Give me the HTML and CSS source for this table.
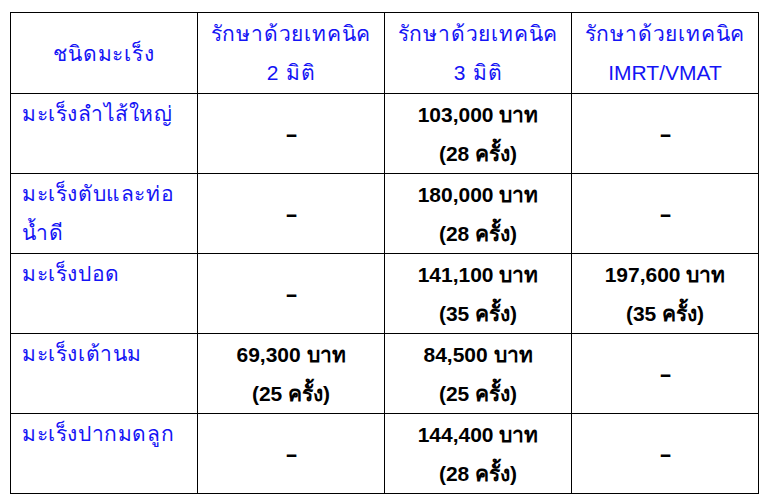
FILE: index.html
```html
<!DOCTYPE html>
<html lang="th">
<head>
<meta charset="utf-8">
<title>ค่ารักษามะเร็ง</title>
<link rel="stylesheet" href="styles.css">
</head>
<body>
<table class="price-table">
  <colgroup>
    <col class="col"><col class="col"><col class="col"><col class="col">
  </colgroup>
  <thead>
    <tr class="head-row">
      <th class="head">ชนิดมะเร็ง</th>
      <th class="head">รักษาด้วยเทคนิค<br>2 มิติ</th>
      <th class="head">รักษาด้วยเทคนิค<br>3 มิติ</th>
      <th class="head">รักษาด้วยเทคนิค<br><span class="latin">IMRT/VMAT</span></th>
    </tr>
  </thead>
  <tbody>
    <tr class="row">
      <td class="name">มะเร็งลำไส้ใหญ่</td>
      <td class="val"><span class="dash">-</span></td>
      <td class="val">103,000 บาท<br>(28 ครั้ง)</td>
      <td class="val"><span class="dash">-</span></td>
    </tr>
    <tr class="row">
      <td class="name">มะเร็งตับและท่อน้ำดี</td>
      <td class="val"><span class="dash">-</span></td>
      <td class="val">180,000 บาท<br>(28 ครั้ง)</td>
      <td class="val"><span class="dash">-</span></td>
    </tr>
    <tr class="row">
      <td class="name">มะเร็งปอด</td>
      <td class="val"><span class="dash">-</span></td>
      <td class="val">141,100 บาท<br>(35 ครั้ง)</td>
      <td class="val">197,600 บาท<br>(35 ครั้ง)</td>
    </tr>
    <tr class="row">
      <td class="name">มะเร็งเต้านม</td>
      <td class="val">69,300 บาท<br>(25 ครั้ง)</td>
      <td class="val">84,500 บาท<br>(25 ครั้ง)</td>
      <td class="val"><span class="dash">-</span></td>
    </tr>
    <tr class="row">
      <td class="name">มะเร็งปากมดลูก</td>
      <td class="val"><span class="dash">-</span></td>
      <td class="val">144,400 บาท<br>(28 ครั้ง)</td>
      <td class="val"><span class="dash">-</span></td>
    </tr>
  </tbody>
</table>
</body>
</html>
```

FILE: styles.css
```css
html, body {
  background: #ffffff;
}
body {
  margin: 0;
  padding: 12px 0 0 10px;
  font-family: "Liberation Sans", Arial, sans-serif;
  font-size: 21px;
  line-height: 39px;
}
.price-table {
  border-collapse: collapse;
  table-layout: fixed;
  width: 749px;
}
.col {
  width: 25%;
}
.price-table th,
.price-table td {
  border: 1px solid #000000;
  padding: 0 2px;
}
.head-row {
  height: 81px;
}
.row {
  height: 80px;
}
.price-table .head {
  color: #1414f5;
  font-weight: normal;
  text-align: center;
  vertical-align: middle;
  letter-spacing: 0.8px;
}
.latin {
  letter-spacing: 0;
}
.price-table .name {
  color: #1414f5;
  text-align: left;
  vertical-align: top;
  padding: 0 4px 0 11px;
  letter-spacing: 0.6px;
}
.price-table .val {
  color: #000000;
  font-weight: bold;
  text-align: center;
  vertical-align: middle;
}
.dash {
  display: inline-block;
  transform: scaleX(1.8);
}
```
